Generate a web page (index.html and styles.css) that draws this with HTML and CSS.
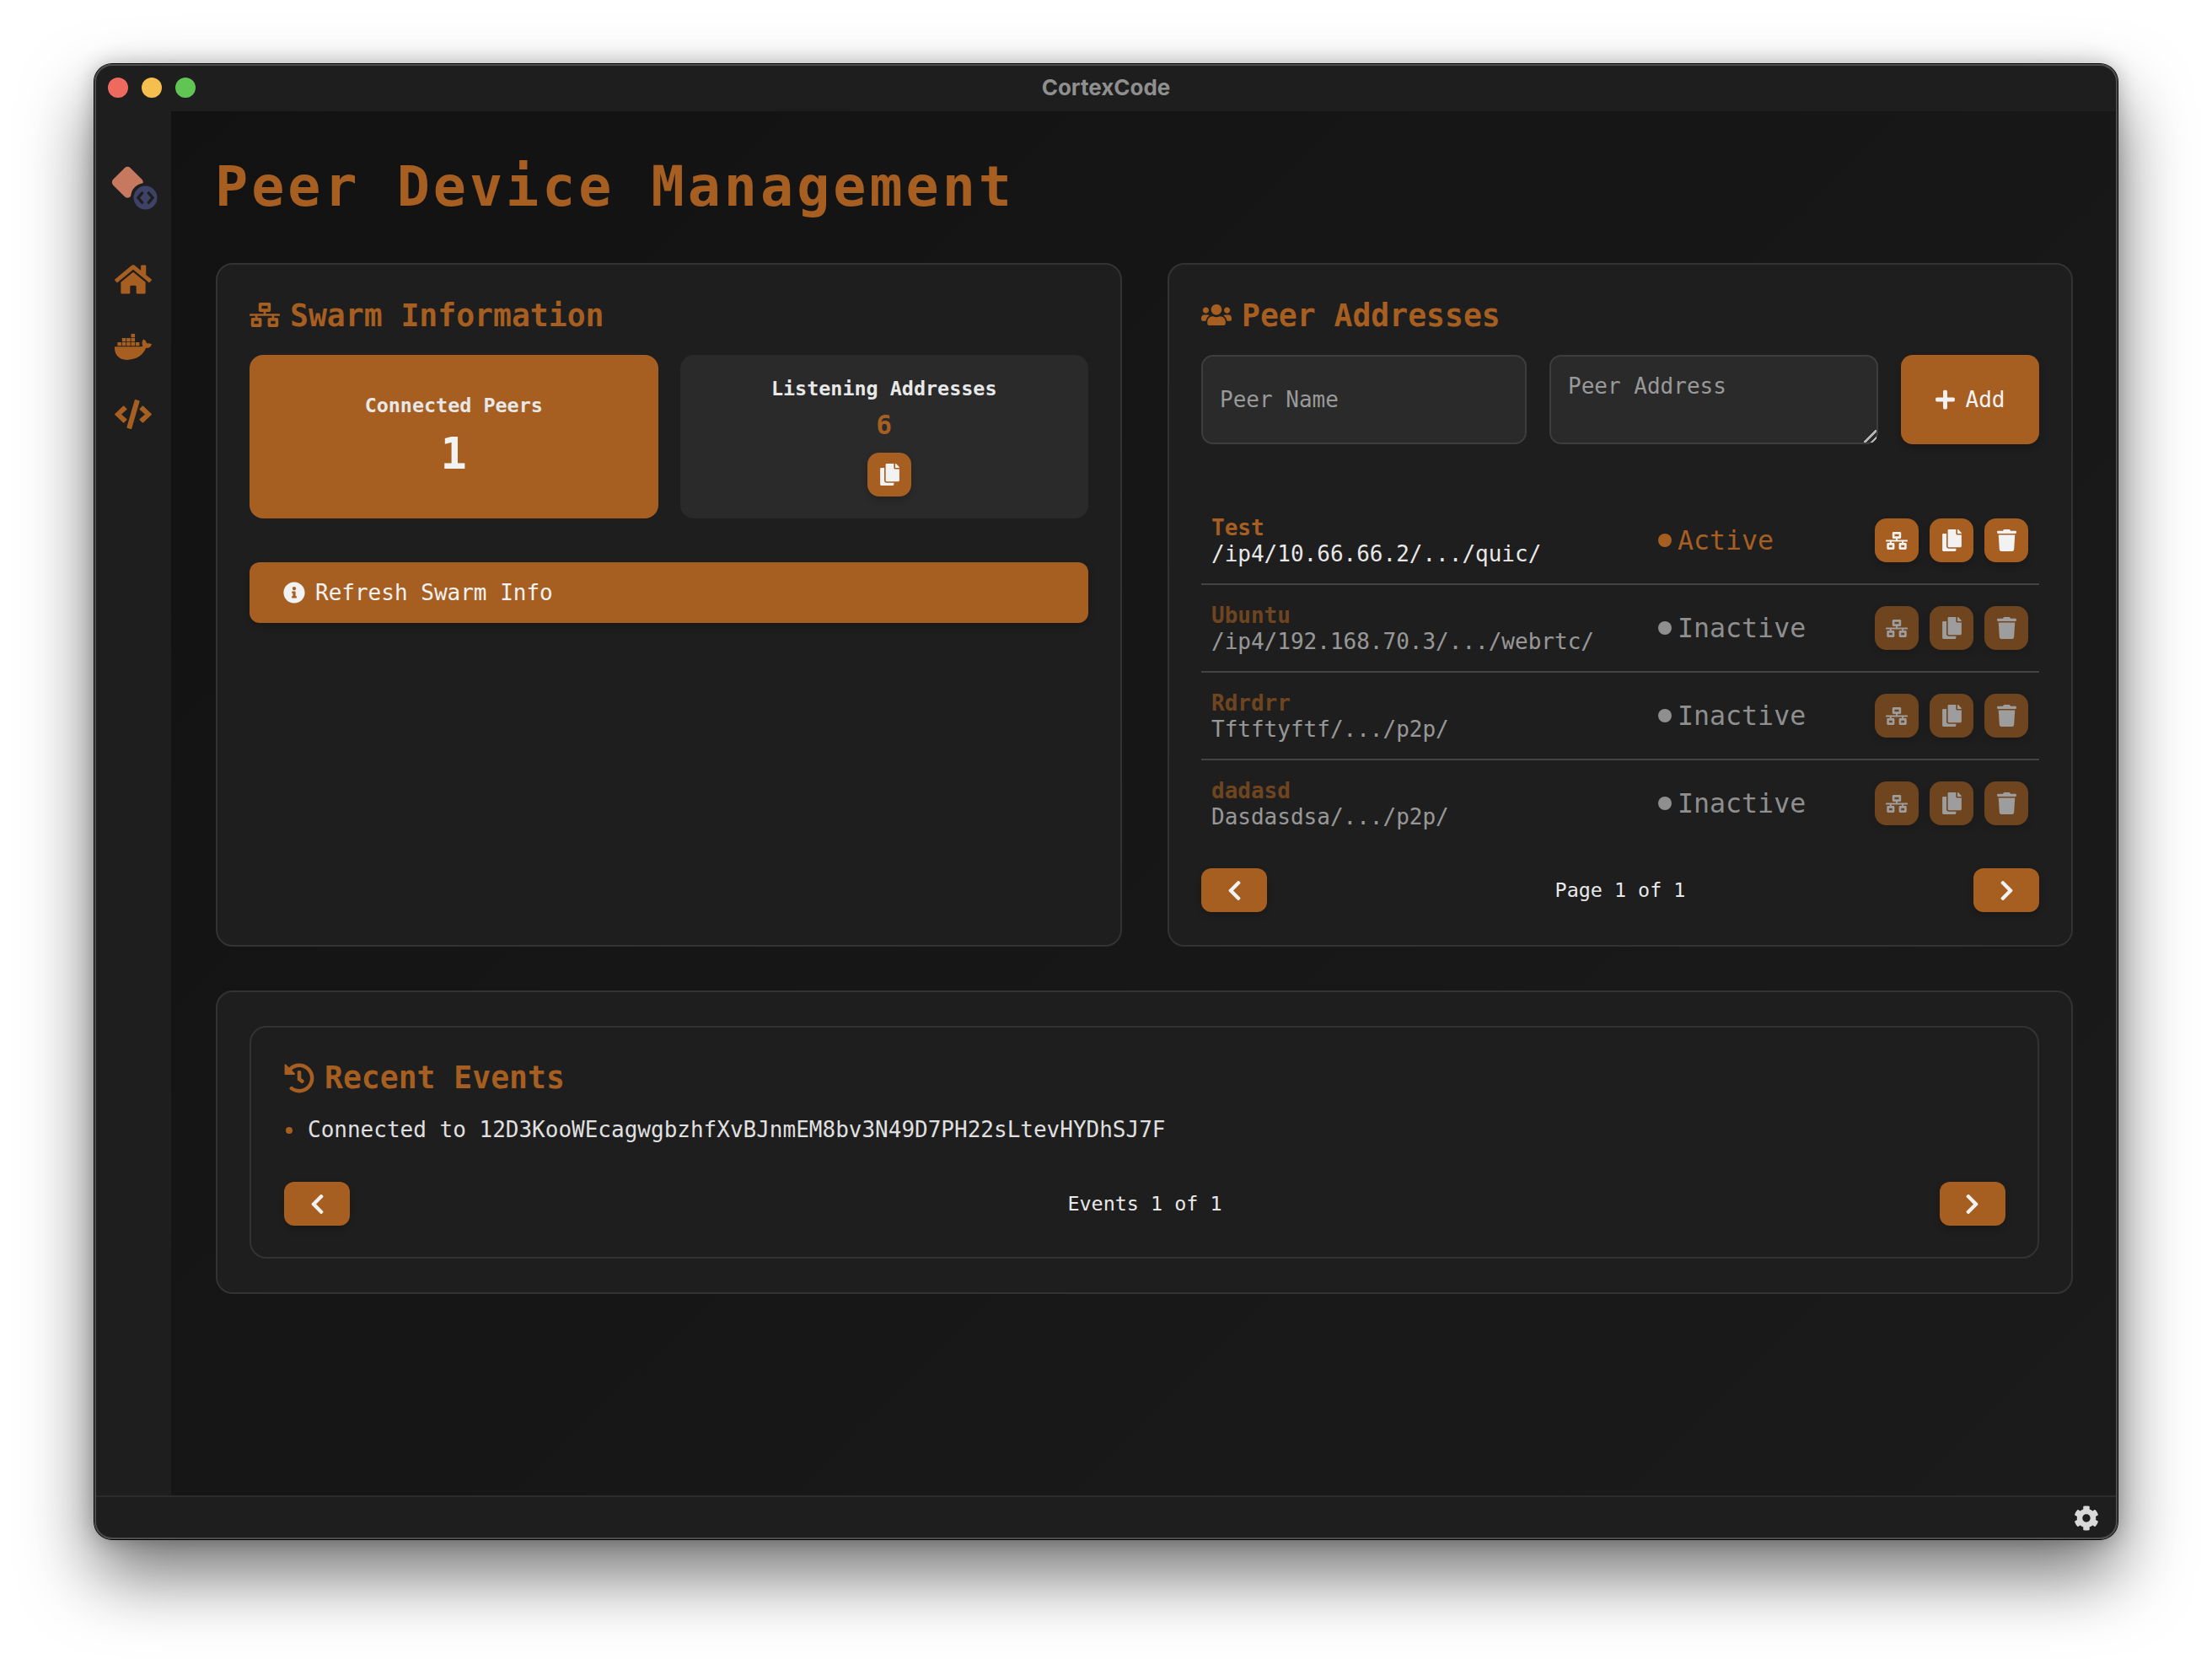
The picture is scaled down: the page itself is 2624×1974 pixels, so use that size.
FILE: index.html
```html
<!DOCTYPE html>
<html lang="en">
<head>
    <meta charset="UTF-8">
    <title>CortexCode</title>
    <link rel="stylesheet" href="styles.css">
</head>
<body>

    <!-- Icon sprites -->
    <svg class="sprites" xmlns="http://www.w3.org/2000/svg">
        <symbol id="i-home" viewBox="0 0 576 512"><path d="M280.37 148.26L96 300.11V464a16 16 0 0 0 16 16l112.06-.29a16 16 0 0 0 15.92-16V368a16 16 0 0 1 16-16h64a16 16 0 0 1 16 16v95.64a16 16 0 0 0 16 16.05L464 480a16 16 0 0 0 16-16V300L295.67 148.26a12.19 12.19 0 0 0-15.3 0zM571.6 251.47L488 182.56V44.05a12 12 0 0 0-12-12h-56a12 12 0 0 0-12 12v72.61L318.47 43a48 48 0 0 0-61 0L4.34 251.47a12 12 0 0 0-1.6 16.9l25.5 31A12 12 0 0 0 45.15 301l235.22-193.74a12.19 12.19 0 0 1 15.3 0L530.9 301a12 12 0 0 0 16.9-1.6l25.5-31a12 12 0 0 0-1.7-16.93z"/></symbol>
        <symbol id="i-docker" viewBox="0 0 640 512"><path d="M349.9 236.3h-66.1v-59.4h66.1v59.4zm0-204.3h-66.1v60.7h66.1V32zm78.2 144.8H362v59.4h66.1v-59.4zm-156.3-72.1h-66.1v60.1h66.1v-60.1zm78.1 0h-66.1v60.1h66.1v-60.1zm276.8 100c-14.4-9.7-47.6-13.2-73.1-8.4-3.3-24-16.7-44.9-41.1-63.7l-14-9.3-9.3 14c-18.4 27.8-23.4 73.6-3.7 103.8-8.7 4.7-25.8 11.1-48.4 10.7H2.4c-8.7 50.8 5.8 116.8 44 162.1 37.1 43.9 92.7 66.2 165.4 66.2 157.4 0 273.9-72.5 328.4-204.2 21.4.4 67.6.1 91.3-45.2 1.5-2.5 6.6-13.2 8.5-17.1l-13.3-8.9zm-511.1-27.9h-66v59.4h66.1v-59.4zm78.1 0h-66.1v59.4h66.1v-59.4zm78.1 0h-66.1v59.4h66.1v-59.4zm-78.1-72.1h-66.1v60.1h66.1v-60.1z"/></symbol>
        <symbol id="i-code" viewBox="0 0 640 512"><path d="M278.9 511.5l-61-17.7c-6.4-1.8-10-8.5-8.2-14.9L346.2 8.7c1.8-6.4 8.5-10 14.9-8.2l61 17.7c6.4 1.8 10 8.5 8.2 14.9L293.8 503.3c-1.9 6.4-8.5 10.1-14.9 8.2zm-114-112.2l43.5-46.4c4.6-4.9 4.3-12.7-.8-17.2L117 256l90.6-79.7c5.1-4.5 5.5-12.3.8-17.2l-43.5-46.4c-4.5-4.8-12.1-5.1-17-.5L3.8 247.2c-5.1 4.7-5.1 12.8 0 17.5l144.1 135.1c4.9 4.6 12.5 4.4 17-.5zm327.2.6l144.1-135.1c5.1-4.7 5.1-12.8 0-17.5L492.1 112.1c-4.8-4.5-12.4-4.3-17 .5L431.6 159c-4.6 4.9-4.3 12.7.8 17.2L523 256l-90.6 79.7c-5.1 4.5-5.5 12.3-.8 17.2l43.5 46.4c4.5 4.9 12.1 5.1 17 .6z"/></symbol>
        <symbol id="i-network" viewBox="0 0 640 512"><path d="M640 264v-16c0-8.84-7.16-16-16-16H344v-40h72c17.67 0 32-14.33 32-32V32c0-17.67-14.33-32-32-32H224c-17.67 0-32 14.33-32 32v128c0 17.67 14.33 32 32 32h72v40H16c-8.84 0-16 7.16-16 16v16c0 8.84 7.16 16 16 16h104v40H64c-17.67 0-32 14.33-32 32v128c0 17.67 14.33 32 32 32h160c17.67 0 32-14.33 32-32V352c0-17.67-14.33-32-32-32h-56v-40h304v40h-56c-17.67 0-32 14.33-32 32v128c0 17.67 14.33 32 32 32h160c17.67 0 32-14.33 32-32V352c0-17.67-14.33-32-32-32h-56v-40h104c8.84 0 16-7.16 16-16zM256 128V64h128v64H256zm-64 320H96v-64h96v64zm352 0h-96v-64h96v64z"/></symbol>
        <symbol id="i-users" viewBox="0 0 640 512"><path d="M96 224c35.3 0 64-28.7 64-64s-28.7-64-64-64-64 28.7-64 64 28.7 64 64 64zm448 0c35.3 0 64-28.7 64-64s-28.7-64-64-64-64 28.7-64 64 28.7 64 64 64zm32 32h-64c-17.6 0-33.5 7.1-45.1 18.6 40.3 22.1 68.9 62 75.1 109.4h66c17.7 0 32-14.3 32-32v-32c0-35.3-28.7-64-64-64zm-256 0c61.9 0 112-50.1 112-112S381.9 32 320 32 208 82.1 208 144s50.1 112 112 112zm76.8 32h-8.3c-20.8 10-43.9 16-68.5 16s-47.6-6-68.5-16h-8.3C179.6 288 128 339.6 128 403.2V432c0 26.5 21.5 48 48 48h288c26.5 0 48-21.5 48-48v-28.8c0-63.6-51.6-115.2-115.2-115.2zm-223.7-13.4C161.5 263.1 145.6 256 128 256H64c-35.3 0-64 28.7-64 64v32c0 17.7 14.3 32 32 32h65.9c6.3-47.4 34.9-87.3 75.2-109.4z"/></symbol>
        <symbol id="i-copy" viewBox="0 0 448 512"><path d="M320 448v40c0 13.255-10.745 24-24 24H24c-13.255 0-24-10.745-24-24V120c0-13.255 10.745-24 24-24h72v296c0 30.879 25.121 56 56 56h168zm0-344V0H152c-13.255 0-24 10.745-24 24v368c0 13.255 10.745 24 24 24h272c13.255 0 24-10.745 24-24V128H344c-13.2 0-24-10.8-24-24zm120.971-31.029L375.029 7.029A24 24 0 0 0 358.059 0H352v96h96v-6.059a24 24 0 0 0-7.029-16.97z"/></symbol>
        <symbol id="i-trash" viewBox="0 0 448 512"><path d="M432 32H312l-9.4-18.7A24 24 0 0 0 281.1 0H166.8a23.72 23.72 0 0 0-21.4 13.3L136 32H16A16 16 0 0 0 0 48v32a16 16 0 0 0 16 16h416a16 16 0 0 0 16-16V48a16 16 0 0 0-16-16zM53.2 467a48 48 0 0 0 47.9 45h245.8a48 48 0 0 0 47.9-45L416 128H32z"/></symbol>
        <symbol id="i-info" viewBox="0 0 512 512"><path d="M256 8C119.043 8 8 119.083 8 256c0 136.997 111.043 248 248 248s248-111.003 248-248C504 119.083 392.957 8 256 8zm0 110c23.196 0 42 18.804 42 42s-18.804 42-42 42-42-18.804-42-42 18.804-42 42-42zm56 254c0 6.627-5.373 12-12 12h-88c-6.627 0-12-5.373-12-12v-24c0-6.627 5.373-12 12-12h12v-64h-12c-6.627 0-12-5.373-12-12v-24c0-6.627 5.373-12 12-12h64c6.627 0 12 5.373 12 12v100h12c6.627 0 12 5.373 12 12v24z"/></symbol>
        <symbol id="i-plus" viewBox="0 0 448 512"><path d="M416 208H272V64c0-17.67-14.33-32-32-32h-32c-17.67 0-32 14.33-32 32v144H32c-17.67 0-32 14.33-32 32v32c0 17.67 14.33 32 32 32h144v144c0 17.67 14.33 32 32 32h32c17.67 0 32-14.33 32-32V304h144c17.67 0 32-14.33 32-32v-32c0-17.67-14.33-32-32-32z"/></symbol>
        <symbol id="i-left" viewBox="0 0 320 512"><path d="M34.52 239.03L228.87 44.69c9.37-9.37 24.57-9.37 33.94 0l22.67 22.67c9.36 9.36 9.37 24.52.04 33.9L131.49 256l154.02 154.75c9.34 9.38 9.32 24.54-.04 33.9l-22.67 22.67c-9.37 9.37-24.57 9.37-33.94 0L34.52 272.97c-9.37-9.37-9.37-24.57 0-33.94z"/></symbol>
        <symbol id="i-right" viewBox="0 0 320 512"><path d="M285.476 272.971L91.132 467.314c-9.373 9.373-24.569 9.373-33.941 0l-22.667-22.667c-9.357-9.357-9.375-24.522-.04-33.901L188.505 256 34.484 101.255c-9.335-9.379-9.317-24.544.04-33.901l22.667-22.667c9.373-9.373 24.569-9.373 33.941 0L285.475 239.03c9.373 9.372 9.373 24.568.001 33.941z"/></symbol>
        <symbol id="i-history" viewBox="0 0 512 512"><path d="M504 255.531c.253 136.64-111.18 248.372-247.82 248.468-59.015.042-113.223-20.53-155.822-54.911-11.077-8.94-11.905-25.541-1.839-35.607l11.267-11.267c8.609-8.609 22.353-9.551 31.891-1.984C173.062 425.135 212.781 440 256 440c101.705 0 184-82.311 184-184 0-101.705-82.311-184-184-184-48.814 0-93.149 18.969-126.068 49.932l50.754 50.754c10.08 10.08 2.941 27.314-11.313 27.314H24c-8.837 0-16-7.163-16-16V38.627c0-14.254 17.234-21.393 27.314-11.314l49.372 49.372C129.209 34.136 189.552 8 256 8c136.81 0 247.747 110.78 248 247.531zm-180.912 78.784l9.823-12.63c8.138-10.463 6.253-25.542-4.21-33.679L288 256.349V152c0-13.255-10.745-24-24-24h-16c-13.255 0-24 10.745-24 24v135.651l65.409 50.874c10.463 8.137 25.541 6.253 33.679-4.21z"/></symbol>
        <symbol id="i-cog" viewBox="0 0 512 512"><path d="M487.4 315.7l-42.6-24.6c4.3-23.2 4.3-47 0-70.2l42.6-24.6c4.9-2.8 7.1-8.6 5.5-14-11.1-35.6-30-67.8-54.7-94.6-3.8-4.1-10-5.1-14.8-2.3L380.8 110c-17.9-15.4-38.5-27.3-60.8-35.1V25.8c0-5.6-3.9-10.5-9.4-11.7-36.7-8.2-74.3-7.8-109.2 0-5.5 1.2-9.4 6.1-9.4 11.7V75c-22.2 7.9-42.8 19.8-60.8 35.1L88.7 85.5c-4.9-2.8-11-1.9-14.8 2.3-24.7 26.7-43.6 58.9-54.7 94.6-1.7 5.4.6 11.2 5.5 14L67.3 221c-4.3 23.2-4.3 47 0 70.2l-42.6 24.6c-4.9 2.8-7.1 8.6-5.5 14 11.1 35.6 30 67.8 54.7 94.6 3.8 4.1 10 5.1 14.8 2.3l42.6-24.6c17.9 15.4 38.5 27.3 60.8 35.1v49.2c0 5.6 3.9 10.5 9.4 11.7 36.7 8.2 74.3 7.8 109.2 0 5.5-1.2 9.4-6.1 9.4-11.7v-49.2c22.2-7.9 42.8-19.8 60.8-35.1l42.6 24.6c4.9 2.8 11 1.9 14.8-2.3 24.7-26.7 43.6-58.9 54.7-94.6 1.5-5.5-.7-11.3-5.6-14.1zM256 336c-44.1 0-80-35.9-80-80s35.9-80 80-80 80 35.9 80 80-35.9 80-80 80z"/></symbol>
    </svg>

    <div class="window">

        <!-- Title bar -->
        <header class="titlebar">
            <div class="lights">
                <span class="light light-red"></span>
                <span class="light light-yellow"></span>
                <span class="light light-green"></span>
            </div>
            <div class="app-title">CortexCode</div>
        </header>

        <div class="app-body">

            <!-- Sidebar -->
            <nav class="sidebar">
                <svg class="logo" viewBox="0 0 58 56">
                    <rect x="6" y="6" width="30" height="30" rx="5" transform="rotate(45 21 21)" fill="#c6795f"/>
                    <circle cx="42" cy="39" r="17" fill="#1e1e1e"/>
                    <circle cx="43" cy="40" r="14.5" fill="#3d4266"/>
                    <path d="M40 33l-6 7 6 7M46 33l6 7-6 7" fill="none" stroke="#1e1e1e" stroke-width="3.4"/>
                </svg>
                <a class="nav-link" href="#"><svg class="nav-icon"><use href="#i-home"/></svg></a>
                <a class="nav-link" href="#"><svg class="nav-icon"><use href="#i-docker"/></svg></a>
                <a class="nav-link" href="#"><svg class="nav-icon"><use href="#i-code"/></svg></a>
            </nav>

            <main class="content">
                <h1 class="page-title">Peer Device Management</h1>

                <div class="columns">

                    <!-- Swarm Information -->
                    <section class="card">
                        <h2 class="card-title"><svg class="title-icon"><use href="#i-network"/></svg>Swarm Information</h2>
                        <div class="stats">
                            <div class="stat stat-primary">
                                <div class="stat-label">Connected Peers</div>
                                <div class="stat-big">1</div>
                            </div>
                            <div class="stat">
                                <div class="stat-label">Listening Addresses</div>
                                <div class="stat-small">6</div>
                                <button class="icon-btn icon-btn-offset"><svg class="ico-copy"><use href="#i-copy"/></svg></button>
                            </div>
                        </div>
                        <button class="refresh-btn"><svg class="ico-info"><use href="#i-info"/></svg>Refresh Swarm Info</button>
                    </section>

                    <!-- Peer Addresses -->
                    <section class="card">
                        <h2 class="card-title"><svg class="title-icon"><use href="#i-users"/></svg>Peer Addresses</h2>
                        <form class="peer-form">
                            <input class="field" type="text" placeholder="Peer Name">
                            <textarea class="field field-area" placeholder="Peer Address"></textarea>
                            <button class="add-btn" type="button"><svg class="ico-plus"><use href="#i-plus"/></svg>Add</button>
                        </form>

                        <div class="peer-list">
                            <div class="peer">
                                <div class="peer-info">
                                    <div class="peer-name">Test</div>
                                    <div class="peer-addr">/ip4/10.66.66.2/.../quic/</div>
                                </div>
                                <div class="status status-on"><span class="dot"></span>Active</div>
                                <div class="peer-actions">
                                    <button class="icon-btn"><svg class="ico-net"><use href="#i-network"/></svg></button>
                                    <button class="icon-btn"><svg class="ico-copy"><use href="#i-copy"/></svg></button>
                                    <button class="icon-btn"><svg class="ico-copy"><use href="#i-trash"/></svg></button>
                                </div>
                            </div>
                            <div class="peer peer-off">
                                <div class="peer-info">
                                    <div class="peer-name">Ubuntu</div>
                                    <div class="peer-addr">/ip4/192.168.70.3/.../webrtc/</div>
                                </div>
                                <div class="status"><span class="dot"></span>Inactive</div>
                                <div class="peer-actions">
                                    <button class="icon-btn"><svg class="ico-net"><use href="#i-network"/></svg></button>
                                    <button class="icon-btn"><svg class="ico-copy"><use href="#i-copy"/></svg></button>
                                    <button class="icon-btn"><svg class="ico-copy"><use href="#i-trash"/></svg></button>
                                </div>
                            </div>
                            <div class="peer peer-off">
                                <div class="peer-info">
                                    <div class="peer-name">Rdrdrr</div>
                                    <div class="peer-addr">Tftftyftf/.../p2p/</div>
                                </div>
                                <div class="status"><span class="dot"></span>Inactive</div>
                                <div class="peer-actions">
                                    <button class="icon-btn"><svg class="ico-net"><use href="#i-network"/></svg></button>
                                    <button class="icon-btn"><svg class="ico-copy"><use href="#i-copy"/></svg></button>
                                    <button class="icon-btn"><svg class="ico-copy"><use href="#i-trash"/></svg></button>
                                </div>
                            </div>
                            <div class="peer peer-off">
                                <div class="peer-info">
                                    <div class="peer-name">dadasd</div>
                                    <div class="peer-addr">Dasdasdsa/.../p2p/</div>
                                </div>
                                <div class="status"><span class="dot"></span>Inactive</div>
                                <div class="peer-actions">
                                    <button class="icon-btn"><svg class="ico-net"><use href="#i-network"/></svg></button>
                                    <button class="icon-btn"><svg class="ico-copy"><use href="#i-copy"/></svg></button>
                                    <button class="icon-btn"><svg class="ico-copy"><use href="#i-trash"/></svg></button>
                                </div>
                            </div>
                        </div>

                        <div class="pager">
                            <button class="pager-btn"><svg class="ico-chev"><use href="#i-left"/></svg></button>
                            <span class="pager-text">Page 1 of 1</span>
                            <button class="pager-btn"><svg class="ico-chev"><use href="#i-right"/></svg></button>
                        </div>
                    </section>
                </div>

                <!-- Recent Events -->
                <section class="card card-wide">
                    <div class="events">
                        <h2 class="card-title"><svg class="title-icon title-icon-square"><use href="#i-history"/></svg>Recent Events</h2>
                        <ul class="event-list">
                            <li class="event">Connected to 12D3KooWEcagwgbzhfXvBJnmEM8bv3N49D7PH22sLtevHYDhSJ7F</li>
                        </ul>
                        <div class="pager">
                            <button class="pager-btn"><svg class="ico-chev"><use href="#i-left"/></svg></button>
                            <span class="pager-text">Events 1 of 1</span>
                            <button class="pager-btn"><svg class="ico-chev"><use href="#i-right"/></svg></button>
                        </div>
                    </div>
                </section>
            </main>
        </div>

        <!-- Status bar -->
        <footer class="statusbar">
            <svg class="ico-cog"><use href="#i-cog"/></svg>
        </footer>
    </div>

</body>
</html>
```

FILE: styles.css
```css
* { box-sizing: border-box; }
html, body { margin: 0; height: 100%; }
body { background: #fff; font-family: "DejaVu Sans Mono", "Liberation Mono", monospace; color: #e8e8e8; overflow: hidden; padding: 76px 0 0 112px; }
svg { fill: currentColor; display: block; flex: none; }
button { font-family: inherit; border: none; cursor: pointer; color: #f2f2f2; }

.sprites { display: none; }

.window { width: 2400px; height: 1750px; display: flex; flex-direction: column; background: #1e1e1e; border-radius: 21px; overflow: hidden; position: relative; }
body::before { content: ""; position: absolute; left: 112px; top: 76px; width: 2400px; height: 1750px; border-radius: 21px; box-shadow: 0 0 0 1px #000, 0 42px 84px rgba(0, 0, 0, 0.55), 0 0 24px rgba(0, 0, 0, 0.25); }
.window::after { content: ""; position: absolute; inset: 0; border-radius: 21px; box-shadow: inset 0 0 0 2px #4e4e4e; pointer-events: none; }

.titlebar { height: 56px; flex: none; display: flex; align-items: center; justify-content: center; position: relative; }
.lights { position: absolute; left: 16px; top: 16px; display: flex; gap: 16px; }
.light { width: 24px; height: 24px; border-radius: 50%; }
.light-red { background: #ee6a5f; }
.light-yellow { background: #f5bf4f; }
.light-green { background: #61c554; }
.app-title { font-family: Inter, "Liberation Sans", sans-serif; font-size: 26px; font-weight: 700; color: #8f8f8f; padding-bottom: 2px; }

.app-body { flex: 1; display: flex; min-height: 0; }

.sidebar { width: 91px; flex: none; display: flex; flex-direction: column; align-items: center; padding-top: 64px; }
.logo { width: 56px; height: 54px; margin: 0 0 62px 2px; }
.nav-link { color: #a65f21; height: 39px; margin-bottom: 41px; display: block; }
.nav-icon { width: 44px; height: 39px; }

.content { flex: 1; padding: 48px 53px 0; background: linear-gradient(135deg, #121212, #1b1b1b); min-width: 0; }
.page-title { margin: 0 0 52px -1px; padding-top: 2px; height: 80px; font-size: 65px; line-height: 80px; font-weight: bold; letter-spacing: 4px; color: #a65f21; }

.columns { display: grid; grid-template-columns: 1075px 1074px; gap: 54px; }
.card { background: #1e1e1e; border: 2px solid #333; border-radius: 20px; padding: 38px 38px 39px; }
.card-wide { margin-top: 52px; padding: 40px 38px; }
.card-title { margin: 0 0 26px; display: flex; align-items: center; gap: 12px; height: 43px; font-size: 36.4px; line-height: 43px; font-weight: bold; color: #a65f21; }
.card > .card-title { padding-top: 2px; }
.card > .card-title .title-icon { margin-top: -2px; }
.title-icon { width: 36px; height: 29px; }
.title-icon-square { height: 36px; }

.stats { display: grid; grid-template-columns: 1fr 1fr; gap: 26px; }
.stat { height: 194px; background: #2a2a2a; border-radius: 16px; display: flex; flex-direction: column; align-items: center; justify-content: center; }
.stat-primary { background: #a65f21; }
.stat-label { font-size: 23.4px; line-height: 28px; font-weight: bold; }
.stat-big { font-size: 52px; line-height: 60px; font-weight: bold; margin: 13px 0 2px; color: #f2f2f2; }
.stat-small { font-size: 31.2px; line-height: 40px; font-weight: bold; margin: 9px 0 13px; color: #a65f21; }

.icon-btn { width: 52px; height: 52px; padding: 0; background: #a65f21; border-radius: 14px; display: flex; align-items: center; justify-content: center; box-shadow: 0 4px 8px rgba(0, 0, 0, 0.2); }
.icon-btn-offset { margin-left: 13px; }
.ico-copy { width: 23px; height: 26px; }
.ico-net { width: 26px; height: 21px; }

.refresh-btn { width: 100%; height: 72px; margin-top: 52px; padding: 0 40px; background: #a65f21; border-radius: 12px; display: flex; align-items: center; gap: 12px; font-size: 26px; box-shadow: 0 4px 8px rgba(0, 0, 0, 0.2); }
.ico-info { width: 26px; height: 26px; }

.peer-form { display: grid; grid-template-columns: 386px 390px 164px; gap: 27px; height: 106px; margin-bottom: 63px; }
.field { height: 106px; width: 100%; margin: 0; padding: 22px 20px; background: #2a2a2a; border: 2px solid #3d3d3d; border-radius: 14px; color: #e8e8e8; font-family: inherit; font-size: 26px; line-height: 30px; }
.field-area { padding-top: 20px; }
.field::placeholder { color: #999; opacity: 1; }
.field-area::-webkit-resizer { background: linear-gradient(135deg, transparent 46%, #b5b5b5 46%, #b5b5b5 58%, transparent 58%, transparent 74%, #b5b5b5 74%, #b5b5b5 86%, transparent 86%); }
.add-btn { background: #a65f21; border-radius: 14px; display: flex; align-items: center; justify-content: center; gap: 13px; font-size: 26px; box-shadow: 0 4px 8px rgba(0, 0, 0, 0.2); }
.ico-plus { width: 23px; height: 26px; }

.peer { height: 104px; padding: 0 13px 0 12px; display: grid; grid-template-columns: 1fr 257px 182px; align-items: center; border-bottom: 2px solid #444; font-size: 26px; line-height: 31px; }
.peer:last-child { border-bottom: none; height: 102px; }
.peer-info { padding-top: 2px; }
.peer-name { font-weight: bold; color: #a65f21; }
.peer-addr { color: #e8e8e8; }
.status { display: flex; align-items: center; gap: 7px; font-size: 31.6px; color: #8f8f8f; }
.status-on { color: #a65f21; }
.dot { width: 16px; height: 16px; border-radius: 50%; background: currentColor; }
.peer-actions { display: flex; gap: 13px; }
.peer-off .peer-info, .peer-off .peer-actions { opacity: 0.6; }

.pager { display: flex; justify-content: space-between; align-items: center; margin-top: 26px; }
.pager-btn { width: 78px; height: 52px; padding: 0; background: #a65f21; border-radius: 12px; display: flex; align-items: center; justify-content: center; box-shadow: 0 4px 8px rgba(0, 0, 0, 0.2); }
.ico-chev { width: 17px; height: 27px; }
.pager-text { font-size: 23.4px; }

.events { border: 2px solid #333; border-radius: 20px; padding: 38px 38px 37px 39px; }
.events .card-title { margin-bottom: 25px; }
.event-list { list-style: none; margin: 0; padding: 0; }
.event { font-size: 26px; line-height: 31px; color: #e0e0e0; padding-left: 28px; position: relative; }
.event::before { content: ""; position: absolute; left: 2px; top: 12px; width: 8px; height: 8px; border-radius: 50%; background: #a65f21; }
.events .pager { margin-top: 46px; }

.statusbar { height: 52px; flex: none; border-top: 2px solid #2c2c2c; display: flex; align-items: center; justify-content: flex-end; padding-right: 22px; }
.ico-cog { width: 30px; height: 30px; color: #d9d9d9; }
```
